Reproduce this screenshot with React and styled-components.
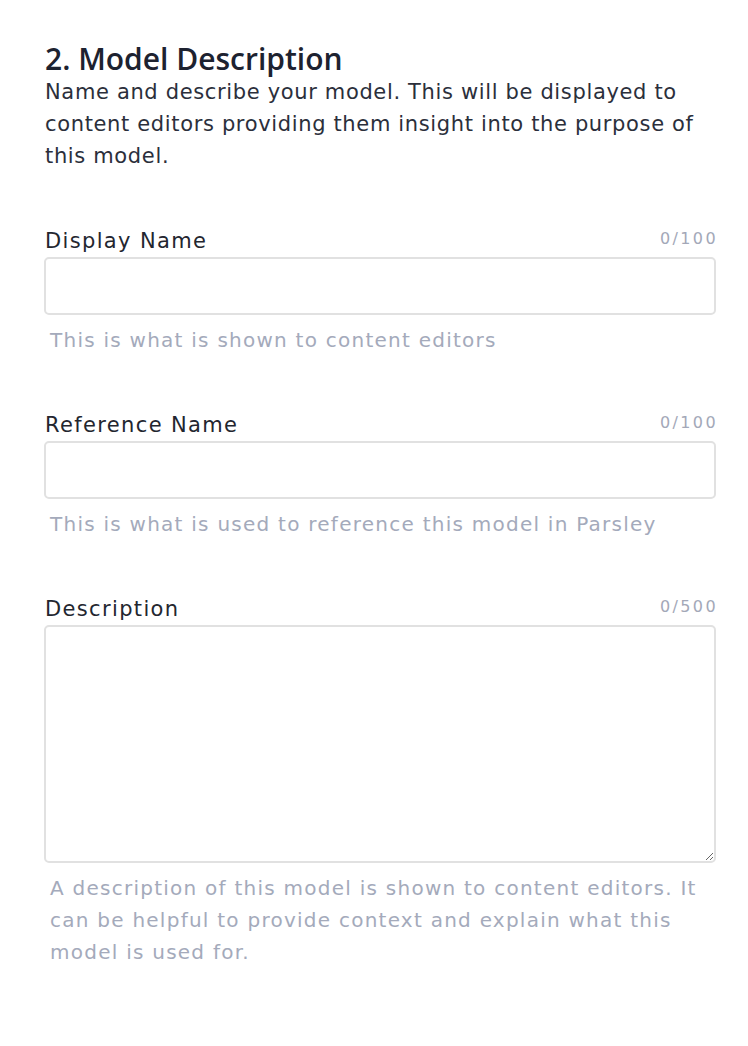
import React from "react";
import styled, { createGlobalStyle } from "styled-components";

const Global = createGlobalStyle`
  html, body { margin: 0; padding: 0; background: #ffffff; }
  * { box-sizing: border-box; }
`;

const Page = styled.div`
  padding: 42px 32px 60px 44px;
  font-family: "DejaVu Sans", sans-serif;
`;

const Header = styled.header`
  padding-left: 1px;
  margin-bottom: 52px;
`;

const Title = styled.h2`
  margin: 0;
  font-family: "Open Sans", "DejaVu Sans", sans-serif;
  font-weight: 600;
  font-size: 30px;
  line-height: 34px;
  color: #1d2230;
`;

const Intro = styled.p`
  margin: 0;
  font-family: "DejaVu Sans", sans-serif;
  font-size: 21px;
  line-height: 32px;
  letter-spacing: 0.65px;
  color: #2b2f3b;
  max-width: 672px;
`;

const Fields = styled.div`
  display: flex;
  flex-direction: column;
  gap: 52px;
`;

const Field = styled.div`
  display: flex;
  flex-direction: column;
`;

const LabelRow = styled.div`
  display: flex;
  justify-content: space-between;
  align-items: center;
  padding-left: 1px;
  height: 33px;
`;

const Label = styled.label`
  font-family: "DejaVu Sans", sans-serif;
  font-size: 21px;
  line-height: 32px;
  letter-spacing: 1.35px;
  color: #23262f;
`;

const Counter = styled.span`
  font-size: 16px;
  letter-spacing: 2.4px;
  margin-right: -2px;
  margin-top: -4px;
  color: #a3a8b8;
`;

const Input = styled.input`
  display: block;
  width: 100%;
  height: 58px;
  border: 2px solid #e1e1e1;
  border-radius: 5px;
  background: #fff;
  outline: none;
  padding: 0 12px;
  font-size: 18px;
`;

const TextArea = styled.textarea`
  display: block;
  width: 100%;
  height: 238px;
  border: 2px solid #e1e1e1;
  border-radius: 5px;
  background: #fff;
  outline: none;
  padding: 12px;
  font-size: 18px;
  resize: vertical;
`;

const Help = styled.p`
  margin: 9px 0 0;
  padding-left: 6px;
  font-size: 20px;
  line-height: 32px;
  letter-spacing: 1.25px;
  color: #a4aabb;
`;

const fields = [
  { label: "Display Name", max: 100, help: "This is what is shown to content editors" },
  { label: "Reference Name", max: 100, help: "This is what is used to reference this model in Parsley" },
  {
    label: "Description",
    max: 500,
    multiline: true,
    help: "A description of this model is shown to content editors. It can be helpful to provide context and explain what this model is used for.",
  },
];

export default function App() {
  return (
    <>
      <Global />
      <Page>
        <Header>
          <Title>2. Model Description</Title>
          <Intro>
            Name and describe your model. This will be displayed to content editors providing them insight into the purpose of this model.
          </Intro>
        </Header>
        <Fields>
          {fields.map((f) => (
            <Field key={f.label}>
              <LabelRow>
                <Label>{f.label}</Label>
                <Counter>0/{f.max}</Counter>
              </LabelRow>
              {f.multiline ? <TextArea /> : <Input />}
              <Help>{f.help}</Help>
            </Field>
          ))}
        </Fields>
      </Page>
    </>
  );
}
